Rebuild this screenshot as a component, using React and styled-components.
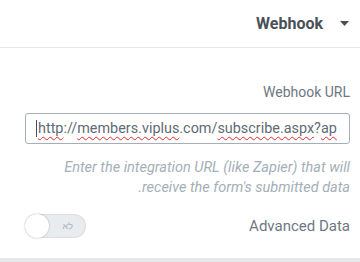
import React from "react";
import styled, { createGlobalStyle } from "styled-components";

const GlobalStyle = createGlobalStyle`
    html, body {
        margin: 0;
        padding: 0;
        background: #e6e9ec;
        font-family: Roboto, "Liberation Sans", Arial, sans-serif;
    }
`;

const Panel = styled.div`
    direction: rtl;
    background: #ffffff;
    width: 360px;
    height: 258px;
    overflow: hidden;
`;

const Header = styled.div`
    display: flex;
    align-items: center;
    gap: 17px;
    height: 47px;
    padding-right: 11px;
    border-bottom: 1px solid #e6e9ec;
`;

const Title = styled.div`
    font-size: 16px;
    font-weight: 700;
    color: #495157;
`;

const Section = styled.div`
    padding: 0 10px 0 25px;
`;

const Label = styled.div`
    margin-top: 34px;
    font-size: 14px;
    line-height: 20px;
    color: #6d7882;
`;

const UrlField = styled.div`
    direction: ltr;
    margin-top: 11px;
    height: 29px;
    border: 1px solid #a4afb7;
    border-radius: 3px;
    padding-left: 10px;
    display: flex;
    align-items: center;
    overflow: hidden;
    white-space: nowrap;
    font-size: 14.4px;
    color: #5f6a73;
`;

const Cursor = styled.span`
    display: inline-block;
    width: 1px;
    height: 17px;
    background: #495157;
    margin-right: 1px;
`;

const Misspelled = styled.span`
    text-decoration: underline wavy #e0282e;
    text-decoration-thickness: 1px;
    text-underline-offset: 3px;
`;

const Description = styled.div`
    margin-top: 14px;
    max-width: 300px;
    font-size: 14.5px;
    line-height: 20px;
    font-style: italic;
    color: #a4afb7;
`;

const SwitchRow = styled.div`
    display: flex;
    align-items: center;
    justify-content: space-between;
    margin-top: 16px;
    height: 24px;
`;

const SwitchLabel = styled.div`
    font-size: 15px;
    color: #6d7882;
`;

const Switch = styled.div`
    direction: ltr;
    position: relative;
    width: 61px;
    height: 24px;
    border-radius: 12px;
    background: #e9ecef;
    box-shadow: inset 0 0 2px rgba(0, 0, 0, 0.18);
    display: flex;
    align-items: center;
    justify-content: flex-end;
    padding-right: 13px;
    box-sizing: border-box;
`;

const Knob = styled.span`
    position: absolute;
    left: 0;
    top: 0;
    width: 24px;
    height: 24px;
    border-radius: 50%;
    background: #ffffff;
    box-shadow: 0 0 2px rgba(0, 0, 0, 0.3);
`;

const SwitchText = styled.span`
    font-size: 9px;
    color: #a4afb7;
`;

const Caret = () => (
    <svg width="9" height="5" viewBox="0 0 9 5">
        <path d="M0 0 H9 L4.5 5 Z" fill="#495157" />
    </svg>
);

const App = () => {
    return (
        <>
            <GlobalStyle />
            <Panel>
                <Header>
                    <Caret />
                    <Title>Webhook</Title>
                </Header>
                <Section>
                    <Label>Webhook URL</Label>
                    <UrlField>
                        <Cursor />
                        <Misspelled>http</Misspelled>://<Misspelled>members.viplus</Misspelled>.com/<Misspelled>subscribe.aspx</Misspelled>?<Misspelled>ap</Misspelled>
                    </UrlField>
                    <Description>
                        Enter the integration URL (like Zapier) that will receive the form's submitted data.
                    </Description>
                    <SwitchRow>
                        <SwitchLabel>Advanced Data</SwitchLabel>
                        <Switch>
                            <Knob />
                            <SwitchText>לא</SwitchText>
                        </Switch>
                    </SwitchRow>
                </Section>
            </Panel>
        </>
    );
};

export default App;
